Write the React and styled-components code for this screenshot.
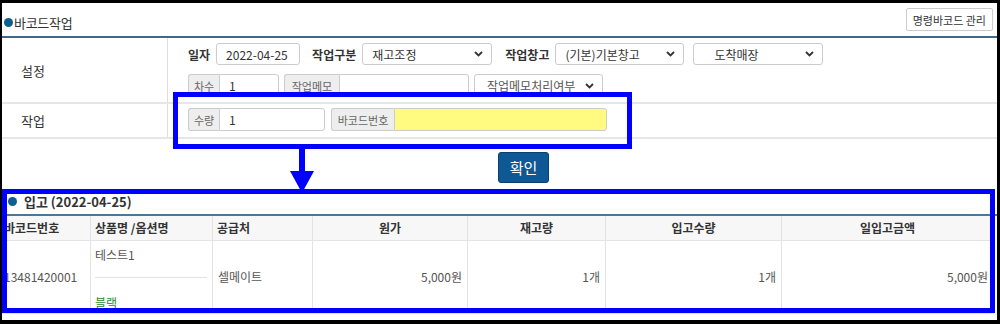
import React from "react";
import styled, { createGlobalStyle } from "styled-components";

const GlobalStyle = createGlobalStyle`
  html, body { margin: 0; padding: 0; background: #fff; }
  * { box-sizing: border-box; }
`;

const Frame = styled.div`
  position: relative;
  width: 1000px;
  height: 324px;
  border-style: solid;
  border-color: #000;
  border-width: 3px 3px 4px 2px;
  background: #fff;
  overflow: hidden;
  font-family: "Noto Sans CJK KR", "Noto Sans", sans-serif;
  color: #333;
`;

const Header = styled.div`
  height: 33px;
  display: flex;
  align-items: center;
  justify-content: space-between;
  padding: 0 4px 0 2px;
`;

const Title = styled.div`
  display: flex;
  align-items: center;
  font-size: 13px;
  margin-top: 5px;
  letter-spacing: -0.3px;
`;

const Dot = styled.span`
  width: 9px;
  height: 9px;
  border-radius: 50%;
  background: #0d5f8f;
  margin-right: ${(p) => p.gap || 1}px;
  flex: none;
`;

const ManageButton = styled.button`
  height: 23px;
  padding: 0 6px;
  border: 1px solid #ccc;
  border-radius: 2px;
  background: #fff;
  font-family: inherit;
  font-size: 11px;
  color: #333;
`;

const Rule = styled.div`
  height: 2px;
  background: ${(p) => p.color || "#3b6a8d"};
`;

const FormRow = styled.div`
  display: flex;
  border-bottom: 2px solid #e6e6e6;
`;

const RowLabel = styled.div`
  width: 166px;
  flex: none;
  border-right: 1px solid #dedede;
  display: flex;
  align-items: center;
  padding-left: 19px;
  font-size: 13px;
  color: #333;
`;

const RowBody = styled.div`
  display: flex;
  flex-direction: column;
  gap: 9px;
  padding: ${(p) => p.pad};
  padding-left: 20px;
`;

const Line = styled.div`
  display: flex;
  align-items: center;
  height: ${(p) => p.h || 22}px;
`;

const FieldLabel = styled.span`
  font-size: 12px;
  font-weight: 700;
  color: #333;
  margin-left: ${(p) => p.ml || 0}px;
  margin-right: 6px;
`;

const Input = styled.div`
  width: ${(p) => p.w}px;
  height: 100%;
  display: flex;
  align-items: center;
  padding: 0 9px;
  border: 1px solid #ccc;
  border-radius: ${(p) => (p.attached ? "0 3px 3px 0" : "3px")};
  background: ${(p) => p.bg || "#fff"};
  font-size: 12px;
  color: #333;
`;

const Addon = styled.div`
  width: ${(p) => p.w}px;
  height: 100%;
  display: flex;
  align-items: center;
  justify-content: center;
  border: 1px solid #ccc;
  border-right: none;
  border-radius: 3px 0 0 3px;
  background: #eee;
  font-size: 11px;
  color: #666;
  margin-left: ${(p) => p.ml || 0}px;
`;

const Select = styled.div`
  width: ${(p) => p.w}px;
  height: 100%;
  display: flex;
  align-items: center;
  justify-content: space-between;
  padding: 0 8px 0 ${(p) => p.pl || 9}px;
  border: 1px solid #ccc;
  border-radius: 3px;
  font-size: 12px;
  color: #333;
  margin-left: ${(p) => p.ml || 0}px;
`;

const Chevron = () => (
  <svg width="9" height="6" viewBox="0 0 9 6">
    <path d="M1 1 L4.5 4.5 L8 1" fill="none" stroke="#333" strokeWidth="1.8" />
  </svg>
);

const ConfirmArea = styled.div`
  height: 50px;
  display: flex;
  justify-content: center;
  align-items: flex-start;
  padding: 13px 0 0 48px;
`;

const ConfirmButton = styled.button`
  width: 51px;
  height: 31px;
  border: 1px solid #0a3f6e;
  border-radius: 3px;
  background: #0f5896;
  color: #fff;
  font-family: inherit;
  font-size: 15px;
  padding: 0;
`;

const SectionTitle = styled.div`
  height: 25px;
  display: flex;
  align-items: center;
  padding-left: 6px;
  font-size: 13px;
  font-weight: 700;
  color: #333;
`;

const Table = styled.table`
  width: 991px;
  border-collapse: collapse;
  table-layout: fixed;
  font-size: 12px;
`;

const Th = styled.th`
  height: 24px;
  background: #f7f7f7;
  border: 1px solid #e3e3e3;
  border-top: none;
  font-weight: 700;
  color: #333;
  text-align: ${(p) => p.align || "center"};
  padding: 0 ${(p) => (p.align === "left" ? "4px" : "0")};
  white-space: nowrap;
  overflow: hidden;
`;

const Td = styled.td`
  border: 1px solid #e3e3e3;
  border-top: none;
  color: #555;
  text-align: ${(p) => p.align || "left"};
  padding: 0 5px 0 ${(p) => p.pl ?? 4}px;
  vertical-align: middle;
  white-space: nowrap;
`;

const Product = styled.div`
  padding: 4px 0 0 0;
  .name {
    line-height: 20px;
  }
  hr {
    border: none;
    border-top: 1px solid #e3e3e3;
    margin: 12px 0 15px;
  }
  .option {
    line-height: 20px;
    color: #2d8a2d;
  }
`;

const HighlightBox = styled.div`
  position: absolute;
  left: ${(p) => p.x}px;
  top: ${(p) => p.y}px;
  width: ${(p) => p.w}px;
  height: ${(p) => p.h}px;
  border: 5px solid #0000ff;
  pointer-events: none;
`;

const Arrow = styled.svg`
  position: absolute;
  left: 285px;
  top: 145px;
`;

const cols = [88, 122, 100, 155, 138, 176, 212];

export default function App() {
  return (
    <>
      <GlobalStyle />
      <Frame>
        <Header>
          <Title>
            <Dot />
            바코드작업
          </Title>
          <ManageButton>명령바코드 관리</ManageButton>
        </Header>
        <Rule />

        <FormRow>
          <RowLabel>설정</RowLabel>
          <RowBody pad="5px 0 5px">
            <Line>
              <FieldLabel>일자</FieldLabel>
              <Input w={84}>2022-04-25</Input>
              <FieldLabel ml={12}>작업구분</FieldLabel>
              <Select w={130}>
                재고조정
                <Chevron />
              </Select>
              <FieldLabel ml={13}>작업창고</FieldLabel>
              <Select w={129}>
                (기본)기본창고
                <Chevron />
              </Select>
              <Select w={130} ml={9} pl={20}>
                도착매장
                <Chevron />
              </Select>
            </Line>
            <Line h={23}>
              <Addon w={31}>차수</Addon>
              <Input w={60} attached>1</Input>
              <Addon w={55} ml={5}>작업메모</Addon>
              <Input w={130} attached />
              <Select w={129} ml={5} pl={12}>
                <span style={{ color: "#555" }}>작업메모처리여부</span>
                <Chevron />
              </Select>
            </Line>
          </RowBody>
        </FormRow>

        <FormRow>
          <RowLabel>작업</RowLabel>
          <RowBody pad="4px 0 6px">
            <Line h={23}>
              <Addon w={31}>수량</Addon>
              <Input w={106} attached>1</Input>
              <Addon w={63} ml={6}>바코드번호</Addon>
              <Input w={213} attached bg="#fffb80" />
            </Line>
          </RowBody>
        </FormRow>

        <ConfirmArea>
          <ConfirmButton>확인</ConfirmButton>
        </ConfirmArea>

        <SectionTitle>
          <Dot gap={7} />
          입고 (2022-04-25)
        </SectionTitle>
        <Rule color="#4a7898" />
        <Table>
          <colgroup>
            {cols.map((w, i) => (
              <col key={i} style={{ width: w }} />
            ))}
          </colgroup>
          <thead>
            <tr>
              <Th align="left" style={{ paddingLeft: 1 }}>바코드번호</Th>
              <Th align="left">상품명 /옵션명</Th>
              <Th align="left">공급처</Th>
              <Th>원가</Th>
              <Th>재고량</Th>
              <Th>입고수량</Th>
              <Th>일입고금액</Th>
            </tr>
          </thead>
          <tbody>
            <tr>
              <Td pl={1}>13481420001</Td>
              <Td>
                <Product>
                  <div className="name">테스트1</div>
                  <hr />
                  <div className="option">블랙</div>
                </Product>
              </Td>
              <Td pl={5}>셀메이트</Td>
              <Td align="right">5,000원</Td>
              <Td align="right">1개</Td>
              <Td align="right">1개</Td>
              <Td align="right">5,000원</Td>
            </tr>
          </tbody>
        </Table>

        <HighlightBox x={171} y={89} w={459} h={57} />
        <Arrow width="28" height="46" viewBox="0 0 28 46">
          <rect x="12" y="0" width="6" height="24" fill="#0000ff" />
          <polygon points="3,23 27,23 15,45" fill="#0000ff" />
        </Arrow>
        <HighlightBox x={0} y={186} w={993} h={124} />
      </Frame>
    </>
  );
}
